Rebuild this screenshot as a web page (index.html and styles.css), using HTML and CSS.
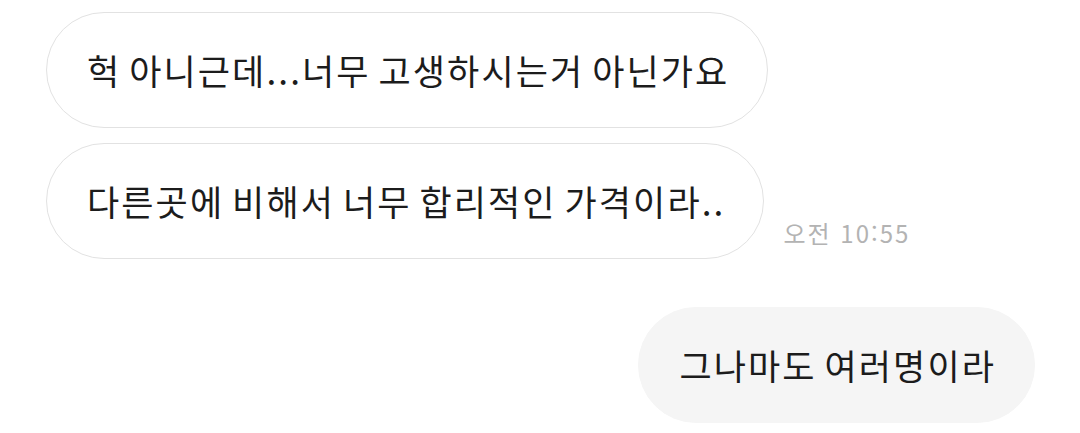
FILE: index.html
```html
<!DOCTYPE html>
<html lang="ko">
<head>
  <meta charset="UTF-8" />
  <meta name="viewport" content="width=device-width, initial-scale=1.0"/>
  <title>Chat</title>
  <link rel="stylesheet" href="styles.css">
</head>
<body>

<div class="chat">
  <!-- received -->
  <div class="row">
    <div class="bubble in">헉 아니근데...너무 고생하시는거 아닌가요</div>
  </div>
  <div class="row last">
    <div class="bubble in">다른곳에 비해서 너무 합리적인 가격이라..</div>
    <span class="time">오전 10:55</span>
  </div>

  <!-- sent -->
  <div class="row out-row">
    <div class="bubble out">그나마도 여러명이라</div>
  </div>
</div>

</body>
</html>
```
FILE: styles.css
```css
body {
  margin: 0;
  background: #fff;
  font-family: "Noto Sans CJK KR", "Noto Sans", sans-serif;
  color: #1c1c1c;
}

.chat {
  display: flex;
  flex-direction: column;
  gap: 15px;
  padding: 12px 45px 0 46px;
}

.row {
  display: flex;
  align-items: flex-end;
  gap: 19px;
}

.out-row {
  justify-content: flex-end;
  margin-top: 33px;
}

.bubble {
  font-size: 35px;
  line-height: 40px;
  letter-spacing: 2.1px;
  word-spacing: -4px;
  padding: 37px 38px 37px 40px;
  border-radius: 60px;
  white-space: nowrap;
}

.in {
  background: #fff;
  border: 1px solid #e2e2e2;
}

.out {
  background: #f5f5f5;
  border: 1px solid #f5f5f5;
}

.time {
  font-size: 24px;
  letter-spacing: 2px;
  color: #b3b3b3;
  margin-bottom: 9px;
}
```
